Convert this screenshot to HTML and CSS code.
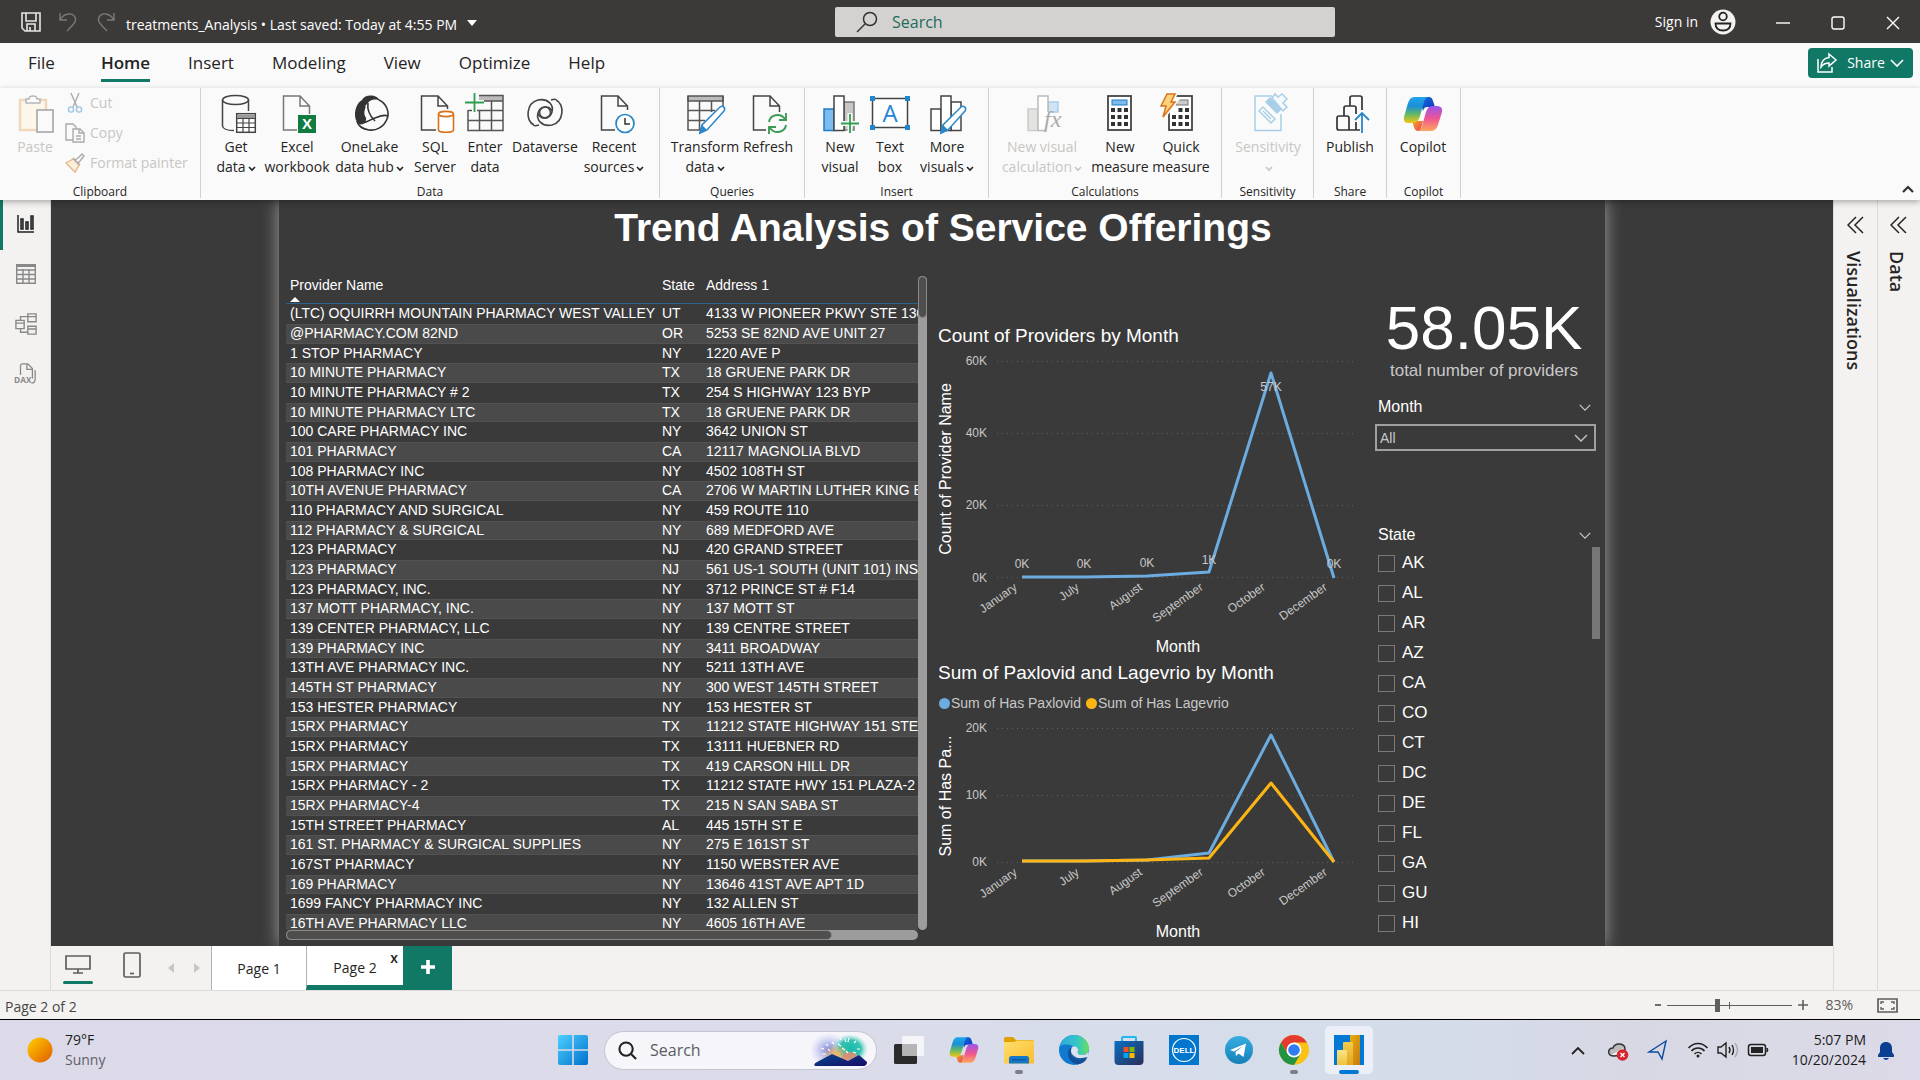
FILE: index.html
```html
<!DOCTYPE html>
<html lang="en">
<head>
<meta charset="utf-8">
<title>treatments_Analysis</title>
<link rel="stylesheet" href="styles.css">
</head>
<body>
<svg class="defs" aria-hidden="true">
  <defs>
    <linearGradient id="cpA" x1="0" y1="0" x2="0" y2="1"><stop offset="0" stop-color="#1fa5ea"/><stop offset=".35" stop-color="#1b8fd8"/><stop offset=".65" stop-color="#5fb867"/><stop offset="1" stop-color="#f5c713"/></linearGradient>
    <linearGradient id="cpB" x1="0" y1="0" x2="0" y2="1"><stop offset="0" stop-color="#9a55ee"/><stop offset=".5" stop-color="#ee5594"/><stop offset="1" stop-color="#ffa65c"/></linearGradient>
    <linearGradient id="cpC" x1="0" y1="0" x2="1" y2="1"><stop offset="0" stop-color="#1a6ce0"/><stop offset="1" stop-color="#0a35b5"/></linearGradient>
    <linearGradient id="cpD" x1="0" y1="0" x2="1" y2="1"><stop offset="0" stop-color="#f8a130"/><stop offset="1" stop-color="#e5484d"/></linearGradient>
    <linearGradient id="sun" x1="0" y1="0" x2="1" y2="1"><stop offset="0" stop-color="#ffd000"/><stop offset="1" stop-color="#e25a00"/></linearGradient>
    <linearGradient id="win" x1="0" y1="0" x2="1" y2="1"><stop offset="0" stop-color="#4cd0ff"/><stop offset="1" stop-color="#0070cc"/></linearGradient>
    <linearGradient id="folder" x1="0" y1="0" x2="1" y2="1"><stop offset="0" stop-color="#ffdf70"/><stop offset="1" stop-color="#fbbc2a"/></linearGradient>
    <linearGradient id="edgeA" x1="0" y1="0" x2="1" y2="0"><stop offset="0" stop-color="#2aa8dd"/><stop offset=".6" stop-color="#36c6c6"/><stop offset="1" stop-color="#66e05a"/></linearGradient>
    <linearGradient id="store" x1="0" y1="0" x2="1" y2="1"><stop offset="0" stop-color="#0b6fc4"/><stop offset="1" stop-color="#2a2f57"/></linearGradient>
    <linearGradient id="tg" x1="0" y1="0" x2="0" y2="1"><stop offset="0" stop-color="#37aee2"/><stop offset="1" stop-color="#1580b8"/></linearGradient>
    <linearGradient id="pbA" x1="0" y1="0" x2="1" y2="1"><stop offset="0" stop-color="#e8ad10"/><stop offset="1" stop-color="#c47a10"/></linearGradient>
    <linearGradient id="pbB" x1="0" y1="0" x2="0" y2="1"><stop offset="0" stop-color="#f3cd4a"/><stop offset="1" stop-color="#e2a51c"/></linearGradient>
    <linearGradient id="pbC" x1="0" y1="0" x2="0" y2="1"><stop offset="0" stop-color="#f9e388"/><stop offset="1" stop-color="#efc23b"/></linearGradient>
    <radialGradient id="fwA"><stop offset="0" stop-color="#6f7fd8"/><stop offset="1" stop-color="#b9b9f0" stop-opacity="0"/></radialGradient>
    <radialGradient id="fwB"><stop offset="0" stop-color="#19b9a8"/><stop offset=".6" stop-color="#35c3b2"/><stop offset="1" stop-color="#9fe5dc" stop-opacity="0"/></radialGradient>
    <radialGradient id="fwC"><stop offset="0" stop-color="#f7b25e"/><stop offset="1" stop-color="#f7b25e" stop-opacity="0"/></radialGradient>
    <linearGradient id="hill" x1="0" y1="0" x2="1" y2="1"><stop offset="0" stop-color="#0a4a8c"/><stop offset="1" stop-color="#170a66"/></linearGradient>
    <symbol id="copilot" viewBox="0 0 40 36">
      <path d="M22 1 H26 Q29 1 30 5 L32 11 H24 Q21 11 20 15 L18 8 Z" fill="url(#cpC)"/>
      <path d="M9 25 L20 25 Q19 30 17 35 H15 Q12 35 11 31 Z" fill="url(#cpD)"/>
      <path d="M11 1 H25 Q22 2 21 6 L17 20 Q15 27 10 27 H5 Q0 27 1 21 L5 7 Q7 1 11 1 Z" fill="url(#cpA)"/>
      <path d="M29 10 H34 Q40 10 39 16 L35 29 Q33 35 28 35 H15 Q18 34 19 30 L23 16 Q25 10 29 10 Z" fill="url(#cpB)"/>
    </symbol>
    <symbol id="chev" viewBox="0 0 8 8"><path d="M1 3 L4 6 L7 3" fill="none" stroke="currentColor" stroke-width="1.600"/></symbol>
    <symbol id="chevThin" viewBox="0 0 16 10"><path d="M2 2 L8 8 L14 2" fill="none" stroke="currentColor" stroke-width="1.4"/></symbol>
    <symbol id="dbl" viewBox="0 0 18 18"><path d="M9 1 L1 9 L9 17 M16 1 L8 9 L16 17" fill="none" stroke="#252423" stroke-width="1.5"/></symbol>
  </defs>
</svg>

<header class="titlebar">
  <div class="titlebar-file">
    <svg class="ic-save" viewBox="0 0 20 20" fill="none" stroke="#e8e6e4" stroke-width="1.6"><path d="M1 1 H19 V19 H4 L1 16 Z M5 1 V9 H15 V1 M6 19 V12 H14 V19 M9 15 V19"/></svg>
    <svg class="ic-undo" viewBox="0 0 18 20" fill="none" stroke="#7b7977" stroke-width="1.4"><path d="M1 1 V8 H8 M1 8 C5 1 13 0 16 5 C18 9 15 12 8 19"/></svg>
    <svg class="ic-undo" viewBox="0 0 18 20" fill="none" stroke="#7b7977" stroke-width="1.4"><path d="M17 1 V8 H10 M17 8 C13 1 5 0 2 5 C0 9 3 12 10 19"/></svg>
    <button class="doc-name" type="button">treatments_Analysis • Last saved: Today at 4:55 PM
      <svg viewBox="0 0 10 6"><path d="M0 0 H10 L5 6 Z" fill="#fff"/></svg></button>
  </div>
  <label class="titlebar-search">
    <svg viewBox="0 0 22 22" fill="none" stroke="#333" stroke-width="1.5"><circle cx="14" cy="8" r="6.5"/><path d="M9 13 L1 21"/></svg>
    <input type="text" placeholder="Search" aria-label="Search">
  </label>
  <div class="titlebar-right">
    <button class="signin" type="button">Sign in
      <svg viewBox="0 0 26 26"><circle cx="13" cy="13" r="12.5" fill="#f3f2f1"/><g fill="none" stroke="#252423" stroke-width="1.8"><circle cx="13" cy="7.500" r="3.800"/><path d="M5.500 14.500 H20.500 C20.500 19 17.500 21.500 13 21.500 C8.500 21.500 5.500 19 5.500 14.500 Z"/></g></svg></button>
    <button class="winbtn" type="button" aria-label="Minimize"><svg viewBox="0 0 14 14"><path d="M0 7 H14" stroke="#fff" stroke-width="1.4"/></svg></button>
    <button class="winbtn" type="button" aria-label="Maximize"><svg viewBox="0 0 14 14"><rect x="1" y="1" width="12" height="12" rx="2" fill="none" stroke="#fff" stroke-width="1.4"/></svg></button>
    <button class="winbtn" type="button" aria-label="Close"><svg viewBox="0 0 14 14"><path d="M1 1 L13 13 M13 1 L1 13" stroke="#fff" stroke-width="1.4"/></svg></button>
  </div>
</header>

<nav class="menu">
  <a class="menu-file" href="#">File</a>
  <a class="active" href="#">Home</a>
  <a href="#">Insert</a>
  <a href="#">Modeling</a>
  <a href="#">View</a>
  <a href="#">Optimize</a>
  <a href="#">Help</a>
  <button class="share" type="button">
    <svg class="share-ic" viewBox="0 0 20 20" fill="none" stroke="#fff" stroke-width="1.5"><path d="M1 6 V19 H15 V14 M12 1 L19 7 L12 13 V10 C8 10 6 11 4 14 C4 9 7 5 12 4.500 Z"/></svg>
    Share
    <svg class="share-chev" viewBox="0 0 14 8"><path d="M1 1 L7 7 L13 1" fill="none" stroke="#fff" stroke-width="1.6"/></svg>
  </button>
</nav>

<section class="ribbon">
  <div class="group g-clip">
    <div class="group-body">
      <button class="tool w-paste off" type="button" disabled>
        <svg viewBox="0 0 40 40"><g opacity=".5"><rect x="5" y="6" width="26" height="30" fill="#fff6dc" stroke="#e8b57a" stroke-width="2.400"/><path d="M11 9 V5 H14 C14 1 22 1 22 5 H25 V9 Z" fill="#fff" stroke="#777" stroke-width="1.600"/><rect x="22" y="16" width="16" height="22" fill="#fafafa" stroke="#555" stroke-width="1.600"/></g></svg>
        <span>Paste</span>
      </button>
      <div class="clip-list">
        <button class="clip off" type="button" disabled><svg viewBox="0 0 20 20" fill="none" stroke-width="1.400"><path d="M6 0 L12 14 M14 0 L8 14" stroke="#aaa"/><circle cx="6" cy="16.500" r="2.600" stroke="#9cc6e4"/><circle cx="14" cy="16.500" r="2.600" stroke="#9cc6e4"/></svg>Cut</button>
        <button class="clip off" type="button" disabled><svg viewBox="0 0 20 20" fill="none" stroke="#aaa" stroke-width="1.400"><path d="M8 17 H1 V1 H8 L11 4 V6 M8 6 H15 L19 10 V19 H8 Z M14 6 V10 H19 M11 13 H16 M11 16 H16"/></svg>Copy</button>
        <button class="clip off" type="button" disabled><svg viewBox="0 0 20 20" fill="none" stroke-width="1.400"><path d="M1 10 L8 6 L14 12 L10 19 Z" stroke="#e5b88a" fill="#fbeedd"/><path d="M8 5 L15 12 M10 7 L13 5 L17 1 L19 3 L15 8 L13 10" stroke="#aaa"/></svg>Format painter</button>
      </div>
    </div>
    <div class="group-name">Clipboard</div>
  </div>

  <div class="group g-data">
    <div class="group-body">
      <button class="tool w-get" type="button">
        <svg viewBox="0 0 40 40" fill="none" stroke="#444" stroke-width="1.500"><ellipse cx="19.500" cy="6" rx="13" ry="4.500"/><path d="M6.500 6 V32 C7 35 12 36.500 18 36.500 M32.500 6 V17"/><rect x="20.700" y="19.700" width="18.600" height="18.600" fill="#fff"/><path d="M21 21 H39 V24 H21 Z" fill="#999" stroke="none"/><path d="M21 24.500 H39 M21 29 H39 M21 33.500 H39 M27 24 V38 M33 24 V38" stroke-width="1.200"/></svg>
        <span>Get<br>data<svg class="chev"><use href="#chev"/></svg></span>
      </button>
      <button class="tool w-64" type="button">
        <svg viewBox="0 0 40 40"><path d="M20 36 H6.500 V2 H23 L32.500 12 V20 M23 2 V12 H32" fill="none" stroke="#777" stroke-width="1.500"/><rect x="21" y="21" width="18" height="18" fill="#107c41"/><text class="xl" x="30" y="35" text-anchor="middle">X</text></svg>
        <span>Excel<br>workbook</span>
      </button>
      <button class="tool w-lake" type="button">
        <svg viewBox="0 0 40 40"><path d="M12 6 C15 0 27 0 30 7 C25 4 20 6 18 9 C14 15 17 21 16 26 C14 31 10 32 7 28 C3 22 5 10 12 6 Z" fill="#333"/><path d="M15 12 C12 19 16 24 17 25 L24 25 C20 20 17 15 18 9 Z" fill="#fafafa"/><g fill="none" stroke="#333" stroke-width="1.600"><path d="M29 6 C36 9 40 18 37 25 C34 33 26 37 19 36 C12 35 8 31 7 27"/><path d="M18 9 C17 15 20 22 25 27 M7 28 C14 31 19 26 25 24 C30 22 34 20 38 22 M15 12 C13 18 13 24 15 28"/></g></svg>
        <span>OneLake<br>data hub<svg class="chev"><use href="#chev"/></svg></span>
      </button>
      <button class="tool w-52" type="button">
        <svg viewBox="0 0 40 40"><path d="M21 36 H6.500 V2 H23 L32.500 12 V15 M23 2 V12 H32" fill="none" stroke="#444" stroke-width="1.500"/><path d="M23.500 20 V36 C24 39 38 39 38.500 36 V20" fill="#fff" stroke="#d8731c" stroke-width="1.600"/><ellipse cx="31" cy="20" rx="7.500" ry="2.600" fill="#fff" stroke="#d8731c" stroke-width="1.600"/></svg>
        <span>SQL<br>Server</span>
      </button>
      <button class="tool w-48" type="button">
        <svg viewBox="0 0 40 40" fill="none" stroke="#555" stroke-width="1.500"><path d="M14 2 H38 V7 H14 Z" fill="#bbb" stroke="none"/><path d="M14 1.500 H38 V36.500 H3 V16 M18 7 H38 M3 16.500 H38 M3 26.500 H38 M14.500 16 V36 M26.500 7 V36"/><path d="M0 8.500 H19 M9.500 -1 V18" stroke="#fafafa" stroke-width="5"/><path d="M0 8.500 H19 M9.500 -1 V18" stroke="#2f9e4f" stroke-width="1.800"/></svg>
        <span>Enter<br>data</span>
      </button>
      <button class="tool w-72" type="button">
        <svg viewBox="0 0 40 40" fill="none" stroke="#444" stroke-width="1.600"><path d="M31 6 C40 10 39 28 27 31 C17 33 11 26 13 19 C15 12 24 11 27 17"/><path d="M9 31 C0 27 1 9 13 6 C23 4 29 11 27 18 C25 25 16 26 13 20"/><path d="M26 6 C29 5 31 5 31 6 M14 31 C11 32 9 32 9 31"/><circle cx="20" cy="18.500" r="5.500"/></svg>
        <span>Dataverse</span>
      </button>
      <button class="tool w-66" type="button">
        <svg viewBox="0 0 40 40"><path d="M21 36 H7.500 V2 H24 L33.500 12 V16 M24 2 V12 H33" fill="none" stroke="#444" stroke-width="1.500"/><circle cx="31" cy="29.500" r="9" fill="#fff" stroke="#2a86c8" stroke-width="1.700"/><path d="M31 24 V30 H36" fill="none" stroke="#333" stroke-width="1.500"/></svg>
        <span>Recent<br>sources<svg class="chev"><use href="#chev"/></svg></span>
      </button>
    </div>
    <div class="group-name">Data</div>
  </div>

  <div class="group g-query">
    <div class="group-body">
      <button class="tool w-trans" type="button">
        <svg viewBox="0 0 40 40" fill="none" stroke="#555" stroke-width="1.500"><path d="M3 2 H38 V7 H3 Z" fill="#bbb"/><path d="M3 2 V36 H16 M38 2 V12 M3 16.500 H30 M3 26.500 H20 M14.500 7 V36 M26.500 7 V18"/><path d="M15 39 L17 31 L35 13 C38 11 41 14 39 17 L22 36 Z" fill="#fff" stroke="#2a86c8"/><path d="M15 39 L17 32 L21 36 Z" fill="#2a86c8" stroke="#2a86c8"/></svg>
        <span>Transform<br>data<svg class="chev"><use href="#chev"/></svg></span>
      </button>
      <button class="tool w-52" type="button">
        <svg viewBox="0 0 40 40" fill="none" stroke="#444" stroke-width="1.500"><path d="M18 36 H5.500 V2 H22 L31.500 12 V18 M22 2 V12 H31"/><g stroke="#3c9a55" stroke-width="1.900"><path d="M21 28 C22 21 32 18 37 25 M38 19 V26 H31 M38 31 C37 38 27 41 22 34 M21 40 V33 H28"/></g></svg>
        <span>Refresh</span>
      </button>
    </div>
    <div class="group-name">Queries</div>
  </div>

  <div class="group g-insert">
    <div class="group-body">
      <button class="tool w-48" type="button">
        <svg viewBox="0 0 40 40" stroke="#444" stroke-width="1.500"><rect x="4" y="15" width="10" height="21.500" fill="#7cbcf0" stroke="#1f7cc4"/><rect x="24" y="8" width="10" height="28" fill="#c8c6c4" stroke="#777"/><rect x="14" y="2" width="10" height="34.500" fill="#fff"/><path d="M20 29.500 H40 M30 19 V40" stroke="#fafafa" stroke-width="5"/><path d="M21 29.500 H39 M30 20 V39" stroke="#2f9e4f" stroke-width="1.800"/></svg>
        <span>New<br>visual</span>
      </button>
      <button class="tool w-52" type="button">
        <svg viewBox="0 0 40 40"><rect x="2.500" y="4.500" width="35" height="29" fill="#fff" stroke="#444" stroke-width="1.500"/><g fill="#1f86d0"><rect x="0" y="2" width="5" height="5"/><rect x="35" y="2" width="5" height="5"/><rect x="0" y="31" width="5" height="5"/><rect x="35" y="31" width="5" height="5"/></g><text class="tb" x="20" y="28" text-anchor="middle">A</text></svg>
        <span>Text<br>box</span>
      </button>
      <button class="tool w-62" type="button">
        <svg viewBox="0 0 40 40" fill="#fff" stroke="#444" stroke-width="1.500"><rect x="4" y="15" width="10" height="21.500"/><rect x="24" y="8" width="10" height="28.500"/><rect x="14" y="2" width="10" height="34.500"/><path d="M14 39 L16 31 L34 13 C37 11 40 14 38 17 L21 36 Z" stroke="#2a86c8"/><path d="M14 39 L16 32 L20 36 Z" fill="#2a86c8" stroke="#2a86c8"/></svg>
        <span>More<br>visuals<svg class="chev"><use href="#chev"/></svg></span>
      </button>
    </div>
    <div class="group-name">Insert</div>
  </div>

  <div class="group g-calc">
    <div class="group-body">
      <button class="tool w-nvc off" type="button" disabled>
        <svg viewBox="0 0 40 40" stroke="#bbb" stroke-width="1.500"><rect x="6" y="15" width="10" height="21.500" fill="#e4e3e1" stroke="#ccc"/><rect x="26" y="8" width="10" height="10" fill="#cfe3f4" stroke="#a9cdea"/><path d="M26 18 V2 H16 V36.500 H23" fill="#fff"/><text class="fx" x="22" y="33" stroke="none">fx</text></svg>
        <span>New visual<br>calculation<svg class="chev"><use href="#chev"/></svg></span>
      </button>
      <button class="tool w-66" type="button">
        <svg viewBox="0 0 40 40"><rect x="8" y="2" width="23" height="34" fill="#fff" stroke="#444" stroke-width="1.800"/><rect x="12" y="6" width="15" height="5" fill="#7cbcf0" stroke="#1f7cc4"/><g fill="#333"><path d="M11 14h4v4h-4z M17.500 14h4v4h-4z M24 14h4v4h-4z M11 21h4v4h-4z M17.500 21h4v4h-4z M24 21h4v4h-4z M11 28h4v4h-4z M17.500 28h4v4h-4z M24 28h4v4h-4z"/></g></svg>
        <span>New<br>measure</span>
      </button>
      <button class="tool w-56" type="button">
        <svg viewBox="0 0 40 40"><rect x="8" y="2" width="23" height="34" fill="#fff" stroke="#444" stroke-width="1.800"/><rect x="15" y="6" width="12" height="5" fill="#ccc" stroke="#777"/><g fill="#333"><path d="M17.500 14h4v4h-4z M24 14h4v4h-4z M11 21h4v4h-4z M17.500 21h4v4h-4z M24 21h4v4h-4z M11 28h4v4h-4z M17.500 28h4v4h-4z M24 28h4v4h-4z"/></g><path d="M6 -1 H15 L11 7 H15 L2 24 L6 12 H0 Z" fill="#fcd27a" stroke="#fafafa" stroke-width="4"/><path d="M6 0 H14 L10 8 H14 L2 23 L5 12 H0 Z" fill="#fcd27a" stroke="#d8731c" stroke-width="1.500"/></svg>
        <span>Quick<br>measure</span>
      </button>
    </div>
    <div class="group-name">Calculations</div>
  </div>

  <div class="group g-sens">
    <div class="group-body">
      <button class="tool w-76 off" type="button" disabled>
        <svg viewBox="0 0 40 40" fill="none" stroke="#a9cfe8" stroke-width="1.500"><path d="M24 2 H7 V36.500 H33 V20"/><path d="M11 17 L15 13 L27 25 L23 29 Z"/><path d="M15 17 L23 25"/><path d="M18 8 L22 4 L33 15 L29 19 Z" fill="#a9cfe8"/><path d="M24 4 L27 0 L30 3 L34 0 L39 5 L35 9 L39 13 L35 17 Z" fill="#f4f9fc"/></svg>
        <span>Sensitivity<br><svg class="chev"><use href="#chev"/></svg></span>
      </button>
    </div>
    <div class="group-name">Sensitivity</div>
  </div>

  <div class="group g-share">
    <div class="group-body">
      <button class="tool w-66" type="button">
        <svg viewBox="0 0 40 40" fill="none" stroke="#333" stroke-width="1.700"><path d="M32 16 V4 Q32 2 30 2 H22 Q20 2 20 4 V12"/><path d="M26 20 V14 Q26 12 24 12 H16 Q14 12 14 14 V22"/><path d="M30 36 H9 Q7 36 7 34 V24 Q7 22 9 22 H17 Q19 22 19 24 V36 M26 28 V36"/><path d="M32 39 V19 M25 26 L32 19 L39 26" stroke="#2a86c8" stroke-width="1.800"/></svg>
        <span>Publish</span>
      </button>
    </div>
    <div class="group-name">Share</div>
  </div>

  <div class="group g-cop">
    <div class="group-body">
      <button class="tool w-66" type="button"><svg><use href="#copilot"/></svg><span>Copilot</span></button>
    </div>
    <div class="group-name">Copilot</div>
  </div>
  <button class="collapse" type="button" aria-label="Collapse ribbon"><svg viewBox="0 0 12 8"><path d="M1 7 L6 2 L11 7" fill="none" stroke="#333" stroke-width="2.200"/></svg></button>
</section>

<main class="workspace">
  <nav class="rail">
    <a class="on" href="#" aria-label="Report view"><svg viewBox="0 0 22 22" fill="none" stroke="#222" stroke-width="1.500"><path d="M3 2 V19 H19"/><path d="M6 6 H8 V16 H6 Z M11 9 H13 V16 H11 Z M16 3 H18 V16 H16 Z" fill="#999"/></svg></a>
    <a href="#" aria-label="Table view"><svg viewBox="0 0 22 22" fill="none" stroke="#888" stroke-width="1.400"><path d="M1 2.500 H21" stroke-width="3"/><path d="M1.700 2 V20.300 H20.300 V2 M2 7 H20 M2 11.500 H20 M2 16 H20 M8 6 V20 M14 6 V20"/></svg></a>
    <a href="#" aria-label="Model view"><svg viewBox="0 0 24 24" fill="none" stroke="#888" stroke-width="1.500"><path d="M1 8 H10 V17 H1 Z M14 1 H23 V9.500 H14 Z M14 14.500 H23 V23 H14 Z M1 11 H10 M14 4 H23 M14 17.500 H23 M6 8 V4 H14 M6 17 V21 H14"/></svg></a>
    <a href="#" aria-label="DAX query view"><svg viewBox="0 0 24 24" fill="none" stroke="#888" stroke-width="1.400"><path d="M6 13 V3 Q6 1 8 1 H14 L19 6 V17 M13 1 V7 H19 M22 8 V17 Q22 22 18 22"/><text class="dax" x="-1" y="22" stroke="none">DAX</text></svg></a>
  </nav>

  <div class="center">
    <div class="canvas">
      <article class="report">
        <h1>Trend Analysis of Service Offerings</h1>
        <div class="visuals">
          <div class="tablebox">
            <div class="tablewrap">
              <table>
                <colgroup><col class="c-name"><col class="c-state"><col></colgroup>
                <thead><tr><th>Provider Name<i class="sort"></i></th><th>State</th><th>Address 1</th></tr></thead>
                <tbody>
                  <tr><td>(LTC) OQUIRRH MOUNTAIN PHARMACY WEST VALLEY</td><td>UT</td><td>4133 W PIONEER PKWY STE 130</td></tr>
                  <tr><td>@PHARMACY.COM 82ND</td><td>OR</td><td>5253 SE 82ND AVE UNIT 27</td></tr>
                  <tr><td>1 STOP PHARMACY</td><td>NY</td><td>1220 AVE P</td></tr>
                  <tr><td>10 MINUTE PHARMACY</td><td>TX</td><td>18 GRUENE PARK DR</td></tr>
                  <tr><td>10 MINUTE PHARMACY # 2</td><td>TX</td><td>254 S HIGHWAY 123 BYP</td></tr>
                  <tr><td>10 MINUTE PHARMACY LTC</td><td>TX</td><td>18 GRUENE PARK DR</td></tr>
                  <tr><td>100 CARE PHARMACY INC</td><td>NY</td><td>3642 UNION ST</td></tr>
                  <tr><td>101 PHARMACY</td><td>CA</td><td>12117 MAGNOLIA BLVD</td></tr>
                  <tr><td>108 PHARMACY INC</td><td>NY</td><td>4502 108TH ST</td></tr>
                  <tr><td>10TH AVENUE PHARMACY</td><td>CA</td><td>2706 W MARTIN LUTHER KING B</td></tr>
                  <tr><td>110 PHARMACY AND SURGICAL</td><td>NY</td><td>459 ROUTE 110</td></tr>
                  <tr><td>112 PHARMACY &amp; SURGICAL</td><td>NY</td><td>689 MEDFORD AVE</td></tr>
                  <tr><td>123 PHARMACY</td><td>NJ</td><td>420 GRAND STREET</td></tr>
                  <tr><td>123 PHARMACY</td><td>NJ</td><td>561 US-1 SOUTH (UNIT 101) INSI</td></tr>
                  <tr><td>123 PHARMACY, INC.</td><td>NY</td><td>3712 PRINCE ST # F14</td></tr>
                  <tr><td>137 MOTT PHARMACY, INC.</td><td>NY</td><td>137 MOTT ST</td></tr>
                  <tr><td>139 CENTER PHARMACY, LLC</td><td>NY</td><td>139 CENTRE STREET</td></tr>
                  <tr><td>139 PHARMACY INC</td><td>NY</td><td>3411 BROADWAY</td></tr>
                  <tr><td>13TH AVE PHARMACY INC.</td><td>NY</td><td>5211 13TH AVE</td></tr>
                  <tr><td>145TH ST PHARMACY</td><td>NY</td><td>300 WEST 145TH STREET</td></tr>
                  <tr><td>153 HESTER PHARMACY</td><td>NY</td><td>153 HESTER ST</td></tr>
                  <tr><td>15RX PHARMACY</td><td>TX</td><td>11212 STATE HIGHWAY 151 STE</td></tr>
                  <tr><td>15RX PHARMACY</td><td>TX</td><td>13111 HUEBNER RD</td></tr>
                  <tr><td>15RX PHARMACY</td><td>TX</td><td>419 CARSON HILL DR</td></tr>
                  <tr><td>15RX PHARMACY - 2</td><td>TX</td><td>11212 STATE HWY 151 PLAZA-2</td></tr>
                  <tr><td>15RX PHARMACY-4</td><td>TX</td><td>215 N SAN SABA ST</td></tr>
                  <tr><td>15TH STREET PHARMACY</td><td>AL</td><td>445 15TH ST E</td></tr>
                  <tr><td>161 ST. PHARMACY &amp; SURGICAL SUPPLIES</td><td>NY</td><td>275 E 161ST ST</td></tr>
                  <tr><td>167ST PHARMACY</td><td>NY</td><td>1150 WEBSTER AVE</td></tr>
                  <tr><td>169 PHARMACY</td><td>NY</td><td>13646 41ST AVE APT 1D</td></tr>
                  <tr><td>1699 FANCY PHARMACY INC</td><td>NY</td><td>132 ALLEN ST</td></tr>
                  <tr><td>16TH AVE PHARMACY LLC</td><td>NY</td><td>4605 16TH AVE</td></tr>
                </tbody>
              </table>
            </div>
            <div class="vbar"><i></i></div>
            <div class="hbar"><i></i></div>
          </div>

          <div class="charts">
            <h2>Count of Providers by Month</h2>
            <svg class="chart chart-1" viewBox="0 0 427 313">
              <g class="grid"><path d="M60 13.500 H419 M60 85.500 H419 M60 157.500 H419 M60 229.500 H419"/></g>
              <g class="tick" text-anchor="end"><text x="50" y="17">60K</text><text x="50" y="89">40K</text><text x="50" y="161">20K</text><text x="50" y="234">0K</text></g>
              <text class="axis" text-anchor="middle" transform="translate(14 121) rotate(-90)">Count of Provider Name</text>
              <path class="line blue" d="M85 229 L147 229 L210 228 L272 224 L334 25 L397 230"/>
              <g class="tick" text-anchor="middle"><text x="85" y="220">0K</text><text x="147" y="220">0K</text><text x="210" y="219">0K</text><text x="272" y="216">1K</text><text x="334" y="43">57K</text><text x="397" y="220">0K</text></g>
              <g class="tick" text-anchor="end">
                <text transform="translate(81 241) rotate(-35)">January</text><text transform="translate(143 241) rotate(-35)">July</text><text transform="translate(206 241) rotate(-35)">August</text><text transform="translate(267 241) rotate(-35)">September</text><text transform="translate(329 241) rotate(-35)">October</text><text transform="translate(391 241) rotate(-35)">December</text>
              </g>
              <text class="axis" x="241" y="304" text-anchor="middle">Month</text>
            </svg>
            <h2>Sum of Paxlovid and Lagevrio by Month</h2>
            <div class="legend"><span><i class="dot-blue"></i>Sum of Has Paxlovid</span><span><i class="dot-gold"></i>Sum of Has Lagevrio</span></div>
            <svg class="chart chart-2" viewBox="0 0 427 230">
              <g class="grid"><path d="M60 12.500 H419 M60 79.500 H419 M60 146.500 H419"/></g>
              <g class="tick" text-anchor="end"><text x="50" y="16">20K</text><text x="50" y="83">10K</text><text x="50" y="150">0K</text></g>
              <text class="axis" text-anchor="middle" transform="translate(14 80) rotate(-90)">Sum of Has Pa...</text>
              <path class="line blue" d="M85 145 L147 145 L210 144 L272 137 L334 19 L397 146"/>
              <path class="line gold" d="M85 145 L147 145 L210 144 L272 142 L334 67 L397 146"/>
              <g class="tick" text-anchor="end">
                <text transform="translate(81 158) rotate(-35)">January</text><text transform="translate(143 158) rotate(-35)">July</text><text transform="translate(206 158) rotate(-35)">August</text><text transform="translate(267 158) rotate(-35)">September</text><text transform="translate(329 158) rotate(-35)">October</text><text transform="translate(391 158) rotate(-35)">December</text>
              </g>
              <text class="axis" x="241" y="221" text-anchor="middle">Month</text>
            </svg>
          </div>

          <div class="slicers">
            <div class="card"><strong>58.05K</strong><span>total number of providers</span></div>
            <div class="slicer-head"><label for="month">Month</label><svg class="thin"><use href="#chevThin"/></svg></div>
            <div class="drop"><select id="month"><option>All</option></select><svg class="thin"><use href="#chevThin"/></svg></div>
            <div class="slicer-head head-state"><span>State</span><svg class="thin"><use href="#chevThin"/></svg></div>
            <div class="states">
              <ul>
                <li><label><input type="checkbox">AK</label></li>
                <li><label><input type="checkbox">AL</label></li>
                <li><label><input type="checkbox">AR</label></li>
                <li><label><input type="checkbox">AZ</label></li>
                <li><label><input type="checkbox">CA</label></li>
                <li><label><input type="checkbox">CO</label></li>
                <li><label><input type="checkbox">CT</label></li>
                <li><label><input type="checkbox">DC</label></li>
                <li><label><input type="checkbox">DE</label></li>
                <li><label><input type="checkbox">FL</label></li>
                <li><label><input type="checkbox">GA</label></li>
                <li><label><input type="checkbox">GU</label></li>
                <li><label><input type="checkbox">HI</label></li>
              </ul>
              <i class="sbar"></i>
            </div>
          </div>
        </div>
      </article>
    </div>

    <div class="pagetabs">
      <button class="layout on" type="button" aria-label="Desktop layout"><svg viewBox="0 0 26 20" fill="none" stroke="#605e5c" stroke-width="1.700"><path d="M1 1 H25 V14 H1 Z M13 14 V18 M8 18 H18"/></svg></button>
      <button class="layout" type="button" aria-label="Mobile layout"><svg class="phone" viewBox="0 0 18 26" fill="none" stroke="#605e5c" stroke-width="1.700"><rect x="1" y="1" width="16" height="24" rx="1.500"/><path d="M7 21.500 H11"/></svg></button>
      <button class="arrow" type="button" aria-label="Previous page"><svg viewBox="0 0 6 10"><path d="M6 0 V10 L0 5 Z" fill="#c8c6c4"/></svg></button>
      <button class="arrow" type="button" aria-label="Next page"><svg viewBox="0 0 6 10"><path d="M0 0 V10 L6 5 Z" fill="#c8c6c4"/></svg></button>
      <button class="tab" type="button">Page 1</button>
      <div class="tab current"><button class="tab-name" type="button">Page 2</button><button class="tab-x" type="button">x</button></div>
      <button class="add" type="button" aria-label="New page"><svg viewBox="0 0 14 14"><path d="M7 0 V14 M0 7 H14" stroke="#fff" stroke-width="3.600"/></svg></button>
    </div>
  </div>

  <aside class="pane pane-vis"><svg><use href="#dbl"/></svg><span>Visualizations</span></aside>
  <aside class="pane"><svg><use href="#dbl"/></svg><span>Data</span></aside>
</main>

<footer class="status">
  <span>Page 2 of 2</span>
  <div class="zoom">
    <button type="button" aria-label="Zoom out"><svg viewBox="0 0 10 10"><path d="M2 5 H8" stroke="#605e5c" stroke-width="1.800"/></svg></button>
    <input type="range" min="0" max="100" value="40" aria-label="Zoom">
    <button type="button" aria-label="Zoom in"><svg viewBox="0 0 10 10"><path d="M0 5 H10 M5 0 V10" stroke="#605e5c" stroke-width="1.600"/></svg></button>
    <span class="pct">83%</span>
    <svg class="fit" viewBox="0 0 21 15" fill="none" stroke="#605e5c" stroke-width="1.400"><path d="M1 1 H20 V14 H1 Z" stroke-width="1.700"/><path d="M4 6 V4 H7 M14 4 H17 V6 M17 9 V11 H14 M7 11 H4 V9"/></svg>
  </div>
</footer>

<footer class="taskbar">
  <div class="weather"><svg viewBox="0 0 26 26"><circle cx="13" cy="13" r="12.500" fill="url(#sun)"/></svg><p>79°F<br><span>Sunny</span></p></div>
  <button class="app" type="button" aria-label="Start"><svg viewBox="0 0 30 30"><path d="M0 2Q0 0 2 0H14.200V14.200H0Z M15.800 0H28Q30 0 30 2V14.200H15.800Z M0 15.800H14.200V30H2Q0 30 0 28Z M15.800 15.800H30V28Q30 30 28 30H15.800Z" fill="url(#win)"/></svg></button>
  <label class="tsearch">
    <svg class="mag" viewBox="0 0 20 20" fill="none" stroke="#222" stroke-width="2.200"><circle cx="8.500" cy="8.500" r="7"/><path d="M14 14 L19 19"/></svg>
    <input type="text" placeholder="Search" aria-label="Search Windows">
    <svg class="fw" viewBox="0 0 56 32"><ellipse cx="17" cy="16" rx="19" ry="17" fill="url(#fwA)"/><ellipse cx="38" cy="15" rx="18" ry="15" fill="url(#fwB)"/><ellipse cx="24" cy="20" rx="14" ry="10" fill="url(#fwC)"/><ellipse cx="38" cy="24" rx="8" ry="6" fill="#f3876a" opacity=".8"/><g stroke="#fff" stroke-width="1.200"><path d="M28 4 L29 6 M37 4 L36 8 M44 7 L42 9 M45 15 H48 M41 18 L44 19 M33 5 L34 8 M20 8 L22 10 M14 10 L16 12 M9 14 L12 15 M10 20 H14 M16 15 L18 17 M26 10 L29 12 M30 14 L33 16 M34 17 L36 19"/></g><path d="M3 32 Q1 30 5 28 L20 20 L36 27 L47 21 L55 28 Q55 31 52 32 Z" fill="url(#hill)"/></svg>
  </label>
  <button class="app" type="button" aria-label="Task view"><svg viewBox="0 0 30 30"><rect x="0" y="9" width="23" height="20" rx="1.500" fill="#2b2b2b"/><rect x="8" y="1" width="22" height="20" rx="1.500" fill="#fff" opacity=".72"/><path d="M8 9 H23 V21 H9.500 Q8 21 8 19.500 Z" fill="#b5b5b5"/></svg></button>
  <button class="app" type="button" aria-label="Copilot"><svg><use href="#copilot"/></svg></button>
  <button class="app run" type="button" aria-label="File Explorer"><svg viewBox="0 0 30 30"><path d="M0 8 V3.500 Q0 2 1.500 2 H9 L12 5 H29 Q30 5 30 6.500 V10 H0 Z" fill="#e0a100"/><path d="M0 7 H10 L13 5.500 H30 V28.500 H0 Z" fill="url(#folder)"/><path d="M5 28.500 V23.500 Q5 21 7.500 21 H22.500 Q25 21 25 23.500 V28.500 Z" fill="#1478c8"/><path d="M8 24.800 H22" stroke="#0a4a8a"/></svg></button>
  <button class="app" type="button" aria-label="Edge"><svg viewBox="0 0 30 30"><circle cx="15" cy="15" r="15" fill="#0f7ad0"/><path d="M.5 12 C2 4 9 0 15 0 C24 0 30 7 30 13 C30 18 26 20 23 20 C19 20 18 18 19 16 C20 13 17 11 14 11 C8 9 3 9 .5 12 Z" fill="url(#edgeA)"/><path d="M11 13 C7 18 9 27 18 29.500 C23 29 26 27 28 23 C21 27 12 24 12 17 C12 14 14 12 14 12 Z" fill="#134f98"/><path d="M13 12 C16 10 20 13 19 16 C18 18 19 20 23 20 C26 20 28 19 29.500 16 C30 19 29 22 28 23 C20 26 12 22 12 16 C12 14 12.500 13 13 12 Z" fill="#dbe2ee"/><path d="M28 23 C21 27 12 23 12 16 C12 19 16 24 23 23 C27 22.500 29 21.500 28 23 Z" fill="#134f98"/></svg></button>
  <button class="app" type="button" aria-label="Store"><svg viewBox="0 0 30 30"><path d="M8 6 V3 Q8 2 9 2 H21 Q22 2 22 3 V6" fill="none" stroke="#23b7f0" stroke-width="2"/><path d="M.5 6 H29.500 V26 Q29.500 30 25.500 30 H4.500 Q.5 30 .5 26 Z" fill="url(#store)"/><path d="M9.500 12h5v5h-5z" fill="#f25022"/><path d="M15.500 12h5v5h-5z" fill="#7fba00"/><path d="M9.500 18h5v5h-5z" fill="#00a4ef"/><path d="M15.500 18h5v5h-5z" fill="#ffb900"/></svg></button>
  <button class="app" type="button" aria-label="Dell"><svg viewBox="0 0 30 30"><rect width="30" height="30" fill="#0076ce"/><circle cx="15" cy="15" r="11.500" fill="none" stroke="#fff" stroke-width="1.200"/><text class="dell" x="15" y="18" text-anchor="middle">DELL</text></svg></button>
  <button class="app" type="button" aria-label="Telegram"><svg viewBox="0 0 30 30"><circle cx="15" cy="15" r="14" fill="url(#tg)"/><path d="M6 15 L22 8.500 L19.500 22 L14.500 18.500 L12 21 L11.500 17 L19 11 L10 16.500 Z" fill="#fff"/></svg></button>
  <button class="app run" type="button" aria-label="Chrome"><svg viewBox="0 0 30 30"><circle cx="15" cy="15" r="15" fill="#fbc116"/><path d="M2 7.500 A15 15 0 0 1 28 7.500 H15 L8.500 18.700 Z" fill="#e33b2e"/><path d="M2 7.500 A15 15 0 0 0 15 30 L21.500 18.700 L15 22 L8.500 18.700 Z" fill="#229342"/><circle cx="15" cy="15" r="7.500" fill="#fff"/><circle cx="15" cy="15" r="5.800" fill="#2e7cf0"/></svg></button>
  <button class="app focus" type="button" aria-label="Power BI Desktop"><svg viewBox="0 0 30 30"><rect width="30" height="30" fill="#0078d4"/><path d="M16 30 V1 Q16 0 17 0 H25 Q26 0 26 1 V30 Z" fill="url(#pbA)"/><path d="M9 30 V8 Q9 7 10 7 H18 Q19 7 19 8 V30 Z" fill="url(#pbB)"/><path d="M3 30 V16 Q3 15 4 15 H12 Q13 15 13 16 V30 Z" fill="url(#pbC)"/></svg></button>
  <div class="tray">
    <svg class="t40" viewBox="0 0 40 30"><path d="M14 19 L20 13 L26 19" fill="none" stroke="#222" stroke-width="1.800"/></svg>
    <svg class="t40" viewBox="0 0 40 30"><path d="M16 21 C9 21 9 13 15 13 C17 7 27 8 27 14 V20 Z" fill="#bbb" stroke="#333" stroke-width="1.500"/><path d="M13 20 L25 13 L26 20 Z" fill="#eee"/><circle cx="24.500" cy="20" r="5.800" fill="#d9232e"/><path d="M22.500 18 L26.500 22 M26.500 18 L22.500 22" stroke="#fff" stroke-width="1.400"/></svg>
    <svg class="t40 t-gap" viewBox="0 0 40 30"><path d="M28 6 L11 17 L20 17 L24 24 Z" fill="none" stroke="#0b4aa0" stroke-width="1.400"/></svg>
    <svg class="t30" viewBox="0 0 30 30" fill="none" stroke="#222" stroke-width="1.600"><path d="M5.500 13 C11 7 19 7 24.500 13 M8.500 16 C12 12 18 12 21.500 16 M11.500 19 C13.500 17 16.500 17 18.500 19"/><circle cx="15" cy="21" r="1.500" fill="#222" stroke="none"/></svg>
    <svg class="t30" viewBox="0 0 30 30" fill="none" stroke="#222" stroke-width="1.400"><path d="M5 12 H8 L13 8 V22 L8 18 H5 Z M16 12 Q18 15 16 18 M19 10 Q22 15 19 20"/><path d="M22 8 Q27 15 22 22" stroke="#aaa"/></svg>
    <svg class="t30" viewBox="0 0 30 30"><rect x="5.500" y="9.500" width="17" height="11" rx="2.500" fill="none" stroke="#222" stroke-width="1.500"/><rect x="8" y="12" width="12" height="6" fill="#222"/><path d="M24 13 Q26 15 24 17 Z" fill="#222" stroke="#222"/></svg>
    <p class="clock">5:07 PM<br>10/20/2024</p>
    <svg class="t40" viewBox="0 0 40 30"><path d="M12 22 V20 L14 17 V13 C14 5 26 5 26 13 V17 L28 20 V22 Z M17 23 H23 Q20 27 17 23 Z" fill="#0a3f91"/></svg>
  </div>
</footer>
</body>
</html>
```
FILE: styles.css
```css
* { box-sizing: border-box; }
body {
  margin: 0;
  height: 100vh;
  display: flex;
  flex-direction: column;
  font: 14px/20px "Open Sans", "Noto Sans", sans-serif;
  color: #252423;
  background: #f3f2f1;
  overflow: hidden;
}
button, input, select { font: inherit; color: inherit; border: 0; background: none; padding: 0; margin: 0; }
a { color: inherit; text-decoration: none; }
p, h1, h2, ul { margin: 0; padding: 0; }
svg { display: block; overflow: visible; }
.defs { position: absolute; width: 0; height: 0; }
.titlebar, .menu, .ribbon, .status, .taskbar { flex-shrink: 0; }

/* title bar */
.titlebar { height: 43px; background: #3b3a39; color: #fff; display: grid; grid-template-columns: 835fr 500fr 585fr; align-items: center; }
.titlebar-file { display: flex; align-items: center; padding-left: 21px; }
.ic-save { width: 20px; height: 20px; margin-right: 18px; }
.ic-undo { width: 18px; height: 20px; margin-right: 20px; }
.doc-name { display: flex; align-items: center; gap: 10px; padding-top: 6px; margin-left: -9px; }
.doc-name svg { width: 10px; height: 6px; margin-bottom: 4px; }
.titlebar-search { height: 30px; background: #d3d2d0; border-radius: 2px; display: flex; align-items: center; padding-left: 21px; gap: 14px; }
.titlebar-search svg { width: 22px; height: 22px; }
.titlebar-search input { flex: 1; font-size: 16px; outline: 0; }
.titlebar-search input::placeholder { color: #1f6b5c; opacity: 1; }
.titlebar-right { display: flex; justify-content: flex-end; align-items: center; }
.signin { display: flex; align-items: center; gap: 12px; margin-right: 19px; }
.signin svg { width: 26px; height: 26px; }
.winbtn { width: 55px; height: 43px; display: grid; place-items: center; padding-top: 3px; }
.winbtn svg { width: 14px; height: 14px; }

/* menu tabs */
.menu { height: 45px; background: #fafafa; display: flex; align-items: center; gap: 38px; padding: 0 7px 5px 28px; font-size: 17px; }
.menu a { height: 36px; line-height: 34px; margin-top: 2px; border-bottom: 3px solid transparent; }
.menu-file { margin-right: 8px; }
.menu a.active { font-weight: 600; border-color: #117865; }
.share { margin-left: auto; height: 30px; width: 105px; border-radius: 4px; background: #117865; color: #fff; display: flex; align-items: center; justify-content: center; font-size: 14px; gap: 5px; }
.share-ic { width: 20px; height: 20px; margin-right: 5px; }
.share-chev { width: 14px; height: 8px; }

/* ribbon */
.ribbon { position: relative; z-index: 1; height: 112px; background: #fafafa; display: flex; padding-bottom: 2px; box-shadow: 0 2px 6px rgba(0, 0, 0, .3); font-size: 14px; }
.group { border-right: 1px solid #d2d0ce; display: flex; flex-direction: column; justify-content: space-between; }
.g-clip { width: 201px; }
.g-data { width: 459px; }
.g-query { width: 145px; }
.g-insert { width: 184px; }
.g-calc { width: 233px; }
.g-sens { width: 92px; }
.g-share { width: 73px; }
.g-cop { width: 74px; }
.group-body { display: flex; padding: 6px 0 0 8px; }
.g-insert .group-body { padding-left: 11px; }
.g-share .group-body, .g-cop .group-body { padding-left: 3px; }
.group-name { font-size: 12px; line-height: 12px; text-align: center; }
.tool { display: flex; flex-direction: column; align-items: center; justify-content: flex-start; white-space: nowrap; text-align: center; }
.tool > svg { width: 40px; height: 40px; margin-bottom: 3px; }
.chev { display: inline-block; width: 8px; height: 8px; margin-left: 2px; }
.off { color: #c8c6c4; }
.w-paste, .w-get, .w-56 { width: 56px; }
.w-get { margin-left: -1px; }
.w-lake { width: 79px; }
.w-48 { width: 48px; }
.w-52 { width: 52px; }
.w-62 { width: 62px; }
.w-64 { width: 66px; }
.w-66 { width: 66px; }
.w-72 { width: 72px; }
.w-trans { width: 74px; }
.w-76 { width: 76px; }
.w-nvc { width: 90px; }
.w-paste { margin-left: -1px; }
.clip-list { display: flex; flex-direction: column; margin: -6px 0 0 2px; }
.clip { height: 30px; display: flex; align-items: center; gap: 5px; white-space: nowrap; }
.clip svg { width: 20px; height: 20px; }
.collapse { margin: auto 6px 5px auto; }
.collapse svg { width: 12px; height: 8px; }
.xl { font: bold 15px "Liberation Sans", Arial, sans-serif; fill: #fff; }
.tb { font: 24px "Open Sans", sans-serif; fill: #1f86d0; }
.fx { font: italic 24px "Liberation Serif", serif; fill: #aaa; }
.dax { font: bold 9px "Open Sans", sans-serif; fill: #888; }
.dell { font: bold 8px "Liberation Sans", Arial, sans-serif; fill: #fff; }

/* workspace */
.workspace { flex: 1; display: flex; min-height: 0; }
.rail { width: 51px; border-right: 1px solid #dddbd9; }
.rail a { height: 50px; display: grid; place-items: center; padding: 0 1px 2px 0; border-left: 3px solid transparent; }
.rail a.on { border-color: #117865; }
.rail svg { width: 22px; height: 22px; }
.center { flex: 1; display: flex; flex-direction: column; min-width: 0; }
.canvas { flex: 1; min-height: 0; background: #3a3a3a; padding: 0 228px; display: flex; overflow: hidden; }
.report { flex: 1; min-width: 0; background: #3a3a3a; box-shadow: 0 0 16px #a0a0a0; padding: 0 5px 0 7px; color: #fff; font-family: "Liberation Sans", Arial, sans-serif; display: flex; flex-direction: column; }
h1 { font-size: 39px; line-height: 54px; text-align: center; font-weight: bold; padding: 1px 0 21px; }
.visuals { flex: 1; min-height: 0; display: grid; grid-template-columns: 641px minmax(0, 1fr) 226px; grid-template-rows: minmax(0, 1fr); column-gap: 10px; }

.tablebox { display: grid; grid-template-columns: minmax(0, 1fr) 9px; grid-template-rows: minmax(0, 1fr) 10px; margin-bottom: 6px; min-height: 0; min-width: 0; }
.tablewrap { overflow: hidden; }
table { width: 100%; table-layout: fixed; border-collapse: separate; border-spacing: 0; font-size: 14px; white-space: nowrap; }
.c-name { width: 372px; }
.c-state { width: 44px; }
th, td { text-align: left; font-weight: normal; padding: 0 0 0 4px; vertical-align: top; overflow: hidden; }
th { height: 28px; line-height: 19px; border-bottom: 1px solid #27638f; }
.sort { display: block; width: 10px; height: 5px; margin-top: 2px; background: #fff; clip-path: polygon(50% 0, 100% 100%, 0 100%); }
td { height: 20px; line-height: 19px; }
tr:nth-child(3n) td { height: 19px; line-height: 18px; }
tbody tr:nth-child(even) td { background: #4a4a4a; box-shadow: inset 0 1px #525252, inset 0 -1px #525252; }
.vbar { background: #9c9c9c; border-radius: 5px; }
.vbar i { display: block; height: 42px; background: #4f4e4c; border: 1px solid #8a8a8a; border-radius: 5px; }
.hbar { background: #9c9c9c; border-radius: 5px; }
.hbar i { display: block; height: 10px; width: 546px; background: #4f4e4c; border: 1px solid #8a8a8a; border-radius: 5px; }

.charts { padding-top: 48px; }
h2 { font-size: 19px; line-height: 24px; font-weight: normal; padding-left: 1px; }
.chart { width: 427px; }
.chart-1 { height: 313px; }
.chart-2 { height: 230px; }
.grid { stroke: #626262; stroke-dasharray: 1 4; fill: none; }
.tick { font-size: 12px; fill: #c8c8c8; }
.axis { font-size: 16px; fill: #fff; }
.line { fill: none; stroke-width: 3; stroke-linejoin: round; }
.blue { stroke: #6cace0; }
.gold { stroke: #fdb515; }
.legend { height: 31px; display: flex; gap: 5px; padding: 8px 0 0 2px; color: #c8c8c8; font-size: 14px; }
.legend span { display: flex; align-items: center; height: 20px; gap: 1px; }
.legend i { width: 11px; height: 11px; border-radius: 50%; }
.dot-blue { background: #6cace0; }
.dot-gold { background: #fdb515; }

.slicers { padding-top: 19px; min-height: 0; }
.card { text-align: center; padding-right: 6px; }
.card strong { display: block; font-size: 62px; line-height: 66px; font-weight: normal; }
.card span { display: block; font-size: 17px; line-height: 20px; color: #c8c8c8; }
.slicer-head { display: flex; justify-content: space-between; align-items: center; font-size: 16px; line-height: 20px; margin-top: 16px; padding: 0 8px 0 4px; }
.thin { width: 14px; height: 9px; color: #c8c8c8; }
.drop { margin: 7px 4px 0 1px; display: grid; grid-template-columns: 1fr 26px; border: 2px solid #a0a0a0; height: 27px; align-items: center; }
.drop select { grid-area: 1 / 1 / 2 / 3; appearance: none; height: 23px; padding-left: 3px; font-size: 14px; color: #c8c8c8; }
.drop svg { grid-area: 1 / 2; justify-self: center; width: 16px; height: 10px; pointer-events: none; }
.head-state { margin-top: 74px; }
.states { display: flex; padding-top: 2px; }
.states ul { flex: 1; list-style: none; padding: 1px 0 0 4px; }
.states li { height: 30px; line-height: 30px; font-size: 17px; }
.states label { display: flex; align-items: center; gap: 7px; }
.states input { appearance: none; width: 17px; height: 17px; border: 1px solid #7a7a7a; }
.sbar { width: 8px; height: 92px; background: #777; }

/* page tabs */
.pagetabs { height: 44px; flex-shrink: 0; display: flex; }
.layout { width: 54px; display: grid; place-items: center; padding-bottom: 6px; }
.layout svg { width: 26px; height: 20px; }
.layout svg.phone { width: 18px; height: 26px; }
.layout.on { position: relative; }
.layout.on::after { content: ""; position: absolute; left: 12px; right: 12px; bottom: 6px; height: 3px; border-radius: 2px; background: #117865; }
.arrow { width: 26px; display: grid; place-items: center; padding-right: 2px; }
.arrow svg { width: 6px; height: 10px; }
.tab { width: 95px; background: #fff; border-left: 1px solid #b5b3b1; text-align: center; padding-top: 2px; }
.tab.current { position: relative; width: 97px; border-bottom: 5px solid #117865; padding-top: 12px; font-weight: 500; }
.tab-x { position: absolute; top: 2px; right: 5px; font-weight: 600; }
.add { width: 49px; background: #117865; display: grid; place-items: center; padding-bottom: 2px; }
.add svg { width: 14px; height: 14px; }

.pane { width: 43px; border-left: 1px solid #dddbd9; display: flex; flex-direction: column; align-items: center; padding-top: 16px; }
.pane-vis { width: 44px; }
.pane svg { width: 18px; height: 18px; }
.pane span { writing-mode: vertical-rl; font-size: 18px; font-weight: 600; margin: 17px 4px 0 0; line-height: 24px; }

/* status bar */
.status { height: 29px; border-top: 1px solid #dddbd9; display: flex; justify-content: space-between; align-items: center; padding: 4px 22px 0 5px; color: #484644; }
.zoom { display: flex; align-items: center; color: #605e5c; padding-bottom: 4px; }
.zoom button svg { width: 10px; height: 10px; }
.zoom input { appearance: none; width: 125px; height: 13px; margin: 0 6px 0 4px; background: linear-gradient(#605e5c, #605e5c) 62px 50% / 1px 7px no-repeat, linear-gradient(#605e5c, #605e5c) 0 50% / 100% 1px no-repeat; }
.zoom input::-webkit-slider-thumb { appearance: none; width: 5px; height: 13px; background: #605e5c; }
.pct { margin: 0 24px 0 17px; }
.fit { width: 21px; height: 15px; }

/* taskbar */
.taskbar { height: 61px; border-top: 1px solid #000; background: linear-gradient(90deg, #dcdae8, #dbdbe9 40%, #d7ddea 60%, #d4dcea 75%, #d8d8e4 85%, #dcdae8); display: flex; align-items: center; color: #1b1b1b; }
.weather { width: 545px; display: flex; align-items: center; gap: 12px; padding-left: 27px; }
.weather svg { width: 26px; height: 26px; }
.weather span { color: #5f5f66; }
.app { width: 55px; height: 60px; display: grid; place-items: center; position: relative; }
.app svg { width: 30px; height: 30px; position: relative; }
.app.run::after, .app.focus::after { content: ""; position: absolute; bottom: 6px; width: 8px; height: 4px; border-radius: 2px; background: #7c7e84; }
.app.focus::before { content: ""; position: absolute; inset: 6px 3px 6px 4px; border-radius: 5px; background: #eceff7; }
.app.focus::after { width: 20px; background: #0078d4; }
.tsearch { width: 273px; height: 39px; margin: 0 4px; border: 1px solid #c5c5d2; border-radius: 20px; background: #f5f5fa; display: flex; align-items: center; padding: 0 8px 0 13px; }
.mag { width: 19px; height: 19px; }
.tsearch input { flex: 1; min-width: 0; margin-left: 13px; font-size: 16px; outline: 0; }
.tsearch input::placeholder { color: #5c5c62; opacity: 1; }
.fw { width: 56px; height: 32px; }
.tray { margin-left: auto; display: flex; align-items: center; padding-right: 14px; }
.t40 { width: 40px; height: 30px; }
.t-gap { margin-right: 5px; }
.t30 { width: 30px; height: 30px; }
.clock { width: 93px; text-align: right; }
```
